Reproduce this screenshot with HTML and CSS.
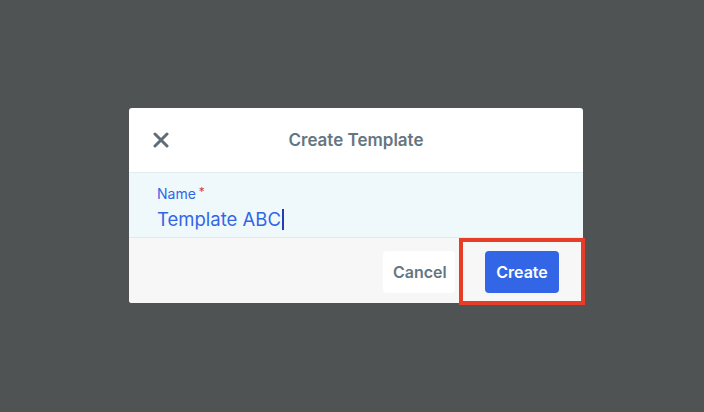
FILE: index.html
```html
<!DOCTYPE html>
<html lang="en">
<head>
<meta charset="utf-8">
<title>Create Template</title>
<link rel="stylesheet" href="styles.css">
</head>
<body>
<div class="stage">
  <div class="dialog">
    <div class="header">
      <button class="close" aria-label="Close">
        <svg width="16" height="16" viewBox="0 0 16 16"><path d="M2 2 L14 14 M14 2 L2 14" stroke="#5f6e78" stroke-width="3" stroke-linecap="round" fill="none"/></svg>
      </button>
      <div class="title">Create Template</div>
      <div class="spacer"></div>
    </div>
    <div class="body">
      <div class="label">Name<span class="req">*</span></div>
      <div class="value">Template ABC<span class="caret"></span></div>
    </div>
    <div class="footer">
      <button class="btn cancel">Cancel</button>
      <div class="create-wrap">
        <button class="btn create">Create</button>
        <div class="highlight"></div>
      </div>
    </div>
  </div>
</div>
</body>
</html>
```

FILE: styles.css
```css
* { box-sizing: border-box; }
html, body {
  margin: 0;
  height: 100%;
}
body {
  background: #4f5354;
  font-family: Inter, "Noto Sans", "Liberation Sans", sans-serif;
}
.stage {
  padding: 108px 0 0 129px;
}
.dialog {
  width: 454px;
  height: 195px;
  background: #ffffff;
  border-radius: 3px;
  display: flex;
  flex-direction: column;
}
.header {
  height: 65px;
  flex: none;
  display: flex;
  align-items: center;
  padding: 0 22px;
  border-bottom: 1px solid #e3ecef;
}
.close {
  width: 20px;
  height: 20px;
  padding: 0;
  border: 0;
  background: none;
  display: flex;
  align-items: center;
  justify-content: center;
}
.title {
  flex: 1;
  text-align: center;
  font-size: 17px;
  font-weight: 600;
  color: #667680;
}
.spacer { width: 20px; }
.body {
  height: 65px;
  flex: none;
  background: #eff9fc;
  border-bottom: 1px solid #e3e8ea;
  padding: 10px 28px 0;
}
.label {
  font-size: 14px;
  color: #3366e6;
  line-height: 18px;
}
.req {
  color: #e0393e;
  font-size: 12px;
  margin-left: 3px;
  vertical-align: 3px;
}
.value {
  font-size: 18.5px;
  line-height: 26px;
  margin-top: 3px;
  color: #3366e6;
  display: flex;
  align-items: center;
}
.caret {
  display: inline-block;
  width: 2px;
  height: 21px;
  background: #1f3fb0;
  margin-left: 1px;
}
.footer {
  flex: 1;
  background: #f7f7f7;
  border-radius: 0 0 3px 3px;
  display: flex;
  align-items: flex-start;
  justify-content: flex-end;
  padding: 13px 24px 0 0;
}
.btn {
  height: 42px;
  border: 0;
  border-radius: 4px;
  font-family: inherit;
  font-size: 16px;
  font-weight: 600;
  padding: 0 10px;
}
.cancel {
  width: 72px;
  background: #ffffff;
  color: #667680;
}
.create-wrap {
  position: relative;
  margin-left: 30px;
}
.create {
  width: 74px;
  background: #3366e6;
  color: #ffffff;
  display: block;
}
.highlight {
  position: absolute;
  left: -26px;
  top: -13px;
  width: 126px;
  height: 67px;
  border: 4px solid #e53d27;
  pointer-events: none;
}
```
